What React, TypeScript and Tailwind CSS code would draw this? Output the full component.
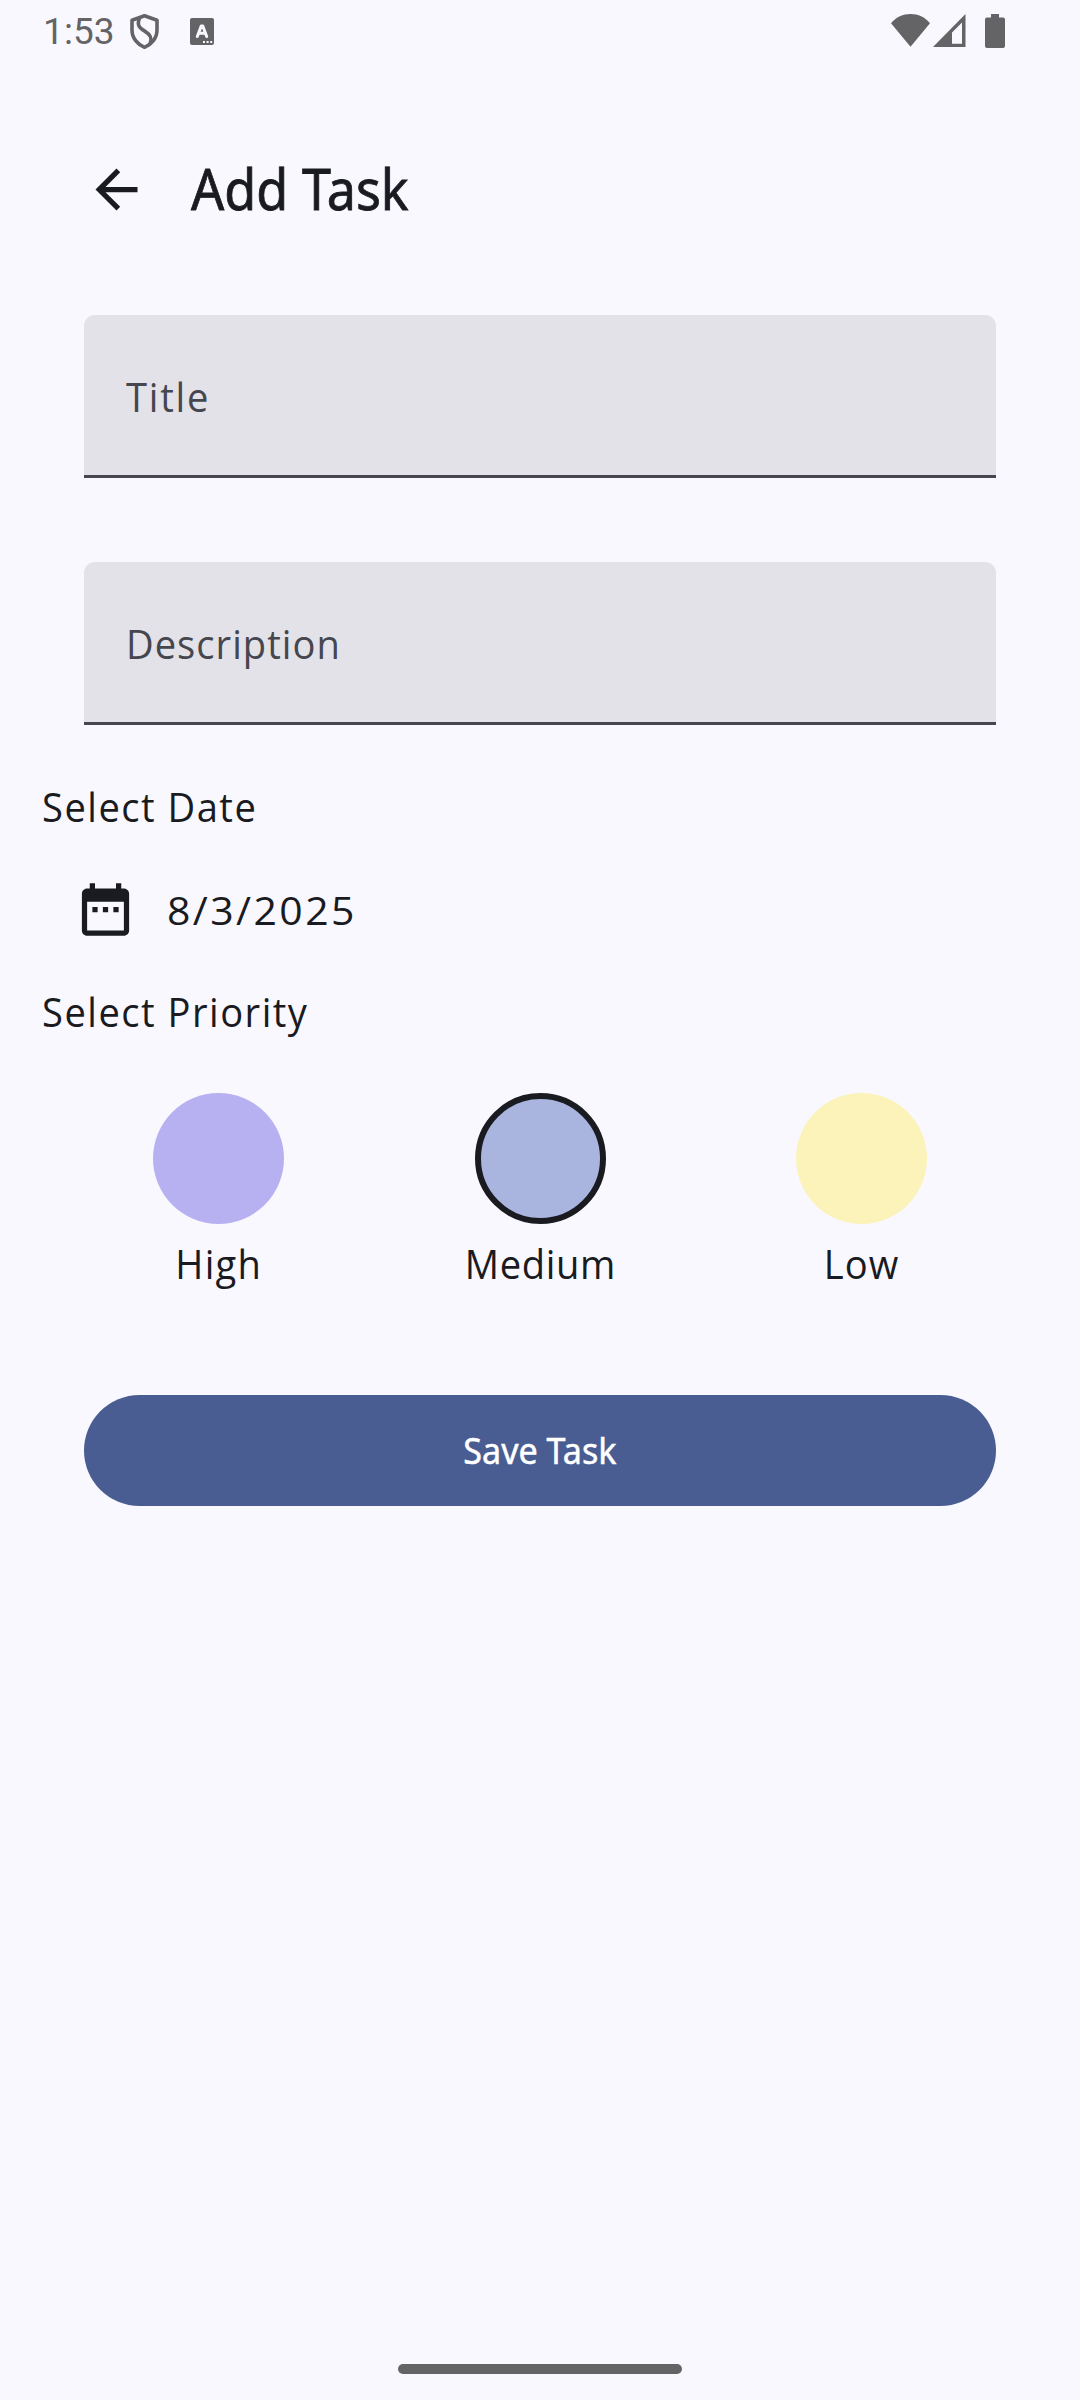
import type { ReactNode } from "react";

function StatusBar() {
  return (
    <header className="flex h-16 items-start pl-[43px] pr-[75px] text-[#646466]">
      <span className="mt-[9px] w-[87px] font-['Roboto'] text-[37px] leading-[45px] tracking-[0.1px]">1:53</span>
      <svg className="mt-[13px] h-[37px] w-[29px]" viewBox="0 0 29 37" fill="none" stroke="currentColor" strokeWidth="3.6">
        <path d="M14.5 2.8 L27 7.2 V17 C27 25.2 21.5 31.5 14.5 34.3 C7.500 31.5 2 25.2 2 17 V7.200 Z" strokeLinejoin="round" />
        <path d="M9.500 5 C6.600 12.500 9.500 14.800 14.800 18.100 C20.500 21.700 22.500 25 20 30.500" />
      </svg>
      <svg className="ml-[31px] mt-[18px] h-[27px] w-6" viewBox="0 0 24 27">
        <rect width="24" height="27" rx="2" fill="currentColor" />
        <path d="M7.300 18.500 L11.200 8 H12.800 L16.700 18.500 M8.800 15.200 H15.200" fill="none" stroke="#f9f8ff" strokeWidth="3" strokeLinecap="round" strokeLinejoin="round" />
        <path d="M13 23h2v2h-2z M16.600 23h2v2h-2z M20.200 23h2v2h-2z" fill="#f9f8ff" />
      </svg>
      <svg className="ml-auto mt-[14px] h-[33px] w-[39px]" viewBox="0 0 39 33" fill="currentColor">
        <path d="M0 9.200 C5.200 3 11.800 0 19.500 0 C27.200 0 33.800 3 39 9.200 L19.500 32.800 Z" />
      </svg>
      <svg className="ml-[3px] mt-[14px] h-[33px] w-[33px]" viewBox="0 0 33 33" fill="currentColor" fillRule="evenodd">
        <path d="M0 33 L32.500 0 V33 Z M19 18.500 V29.700 H29 V8.400 Z" />
      </svg>
      <svg className="ml-[19px] mt-[14px] h-[34px] w-5" viewBox="0 0 20 34" fill="currentColor">
        <path d="M6 0 H14 V3.500 H18 Q20 3.500 20 5.500 V32 Q20 34 18 34 H2 Q0 34 0 32 V5.500 Q0 3.500 2 3.500 H6 Z" />
      </svg>
    </header>
  );
}

function Field({ children, className }: { children: ReactNode; className: string }) {
  return (
    <div className={`mx-[84px] flex h-[163px] items-center rounded-t-[11px] border-b-[3px] border-[#46464f] bg-[#e3e2e8] pl-[42px] pt-[3px] text-[#46464f] ${className}`}>
      {children}
    </div>
  );
}

function Priority({ swatch, label, spacing }: { swatch: string; label: string; spacing: string }) {
  return (
    <div className="flex flex-1 flex-col items-center">
      <div className={`size-[131px] rounded-full ${swatch}`} />
      <span className={`mt-[18px] scale-x-[0.93] leading-[42px] ${spacing}`}>{label}</span>
    </div>
  );
}

export default function App() {
  return (
    <div className="flex h-[2400px] w-[1080px] flex-col bg-[#f9f8ff] font-['Open_Sans','Noto_Sans',sans-serif] text-[41px] text-[#1a1b20]">
      <StatusBar />
      <div className="mt-[93px] flex h-16 items-center pl-[85px]">
        <svg className="size-[63px]" viewBox="0 0 24 24" fill="currentColor">
          <path d="M20 11H7.830l5.590-5.590L12 4l-8 8 8 8 1.410-1.410L7.830 13H20v-2z" />
        </svg>
        <h1 className="-mt-[2px] ml-[43px] origin-left scale-x-[0.93] font-['Noto_Sans'] text-[56px] leading-[64px] [-webkit-text-stroke:0.8px_currentColor]">Add Task</h1>
      </div>
      <Field className="mt-[94px]">
        <span className="origin-left scale-x-[0.93] tracking-[1.9px]">Title</span>
      </Field>
      <Field className="mt-[84px]">
        <span className="origin-left scale-x-[0.93] tracking-[1.1px]">Description</span>
      </Field>
      <h2 className="ml-[42px] mt-[60px] w-fit origin-left scale-x-[0.93] leading-[42px] tracking-[1.6px]">Select Date</h2>
      <div className="mt-[51px] flex h-[63px] items-center pl-[74px]">
        <svg className="size-[63px]" viewBox="0 0 24 24" fill="currentColor">
          <path d="M9 11H7v2h2v-2zm4 0h-2v2h2v-2zm4 0h-2v2h2v-2zm2-7h-1V2h-2v2H8V2H6v2H5c-1.110 0-1.990.9-1.990 2L3 20c0 1.100.890 2 2 2h14c1.100 0 2-.9 2-2V6c0-1.100-.9-2-2-2zm0 16H5V9h14v11z" />
        </svg>
        <span className="ml-[30px] origin-left scale-x-105 text-[39px] leading-[42px] tracking-[2.3px]">8/3/2025</span>
      </div>
      <h2 className="ml-[42px] mt-[49px] w-fit origin-left scale-x-[0.93] leading-[42px] tracking-[1.6px]">Select Priority</h2>
      <div className="mx-[58px] mt-[61px] flex">
        <Priority swatch="bg-[#b7b1f2]" label="High" spacing="tracking-[1.4px]" />
        <Priority swatch="translate-x-px border-[6px] border-[#1a1b20] bg-[#a9b5df]" label="Medium" spacing="tracking-[0.7px]" />
        <Priority swatch="bg-[#fbf3b9]" label="Low" spacing="tracking-[1.1px]" />
      </div>
      <button className="mx-[84px] mt-[111px] flex h-[111px] items-center justify-center rounded-full bg-[#495d92] font-['Noto_Sans'] text-[36px] text-white">
        <span className="scale-x-[0.947] [-webkit-text-stroke:0.5px_currentColor]">Save Task</span>
      </button>
      <div className="mx-auto mb-[26px] mt-auto h-[10px] w-[284px] rounded-full bg-[#646466]" />
    </div>
  );
}
